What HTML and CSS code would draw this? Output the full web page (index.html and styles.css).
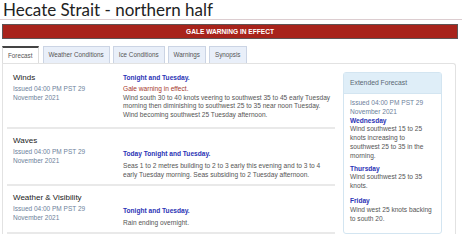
FILE: index.html
```html
<!DOCTYPE html>
<html lang="en">
<head>
  <meta charset="UTF-8" />
  <meta name="viewport" content="width=device-width, initial-scale=1.0"/>
  <title>Hecate Strait - northern half</title>
  <link rel="stylesheet" href="styles.css">
</head>
<body>

  <h1 class="title">Hecate Strait - northern half</h1>

  <div class="warning">GALE WARNING IN EFFECT</div>

  <div class="tabs">
    <div class="tab active">Forecast</div>
    <div class="tab">Weather Conditions</div>
    <div class="tab">Ice Conditions</div>
    <div class="tab">Warnings</div>
    <div class="tab">Synopsis</div>
  </div>

  <div class="panel">
    <div class="main">

      <div class="section first">
        <div class="meta">
          <div class="label">Winds</div>
          <div class="issued">Issued 04:00 PM PST 29<br>November 2021</div>
        </div>
        <div class="detail">
          <div class="period tight">Tonight and Tuesday.</div>
          <div class="alert">Gale warning in effect.</div>
          <div class="text">Wind south 30 to 40 knots veering to southwest 35 to 45 early Tuesday morning then diminishing to southwest 25 to 35 near noon Tuesday. Wind becoming southwest 25 Tuesday afternoon.</div>
        </div>
      </div>

      <div class="section">
        <div class="meta">
          <div class="label">Waves</div>
          <div class="issued">Issued 04:00 PM PST 29<br>November 2021</div>
        </div>
        <div class="detail lower">
          <div class="period">Today Tonight and Tuesday.</div>
          <div class="text">Seas 1 to 2 metres building to 2 to 3 early this evening and to 3 to 4 early Tuesday morning. Seas subsiding to 2 Tuesday afternoon.</div>
        </div>
      </div>

      <div class="section">
        <div class="meta">
          <div class="label">Weather &amp; Visibility</div>
          <div class="issued">Issued 04:00 PM PST 29<br>November 2021</div>
        </div>
        <div class="detail lower">
          <div class="period">Tonight and Tuesday.</div>
          <div class="text">Rain ending overnight.</div>
        </div>
      </div>

    </div>

    <div class="extended">
      <div class="ext-head">Extended Forecast</div>
      <div class="ext-body">
        <div class="issued">Issued 04:00 PM PST 29<br>November 2021</div>
        <div class="day">Wednesday</div>
        <div class="text">Wind southwest 15 to 25 knots increasing to southwest 25 to 35 in the morning.</div>
        <div class="day spaced">Thursday</div>
        <div class="text">Wind southwest 25 to 35 knots.</div>
        <div class="day spaced wide">Friday</div>
        <div class="text">Wind west 25 knots backing to south 20.</div>
      </div>
    </div>
  </div>

</body>
</html>
```

FILE: styles.css
```css
body {
  margin: 0;
  font-family: 'Liberation Sans', Arial, sans-serif;
  background: #fff;
  color: #555;
}

.title {
  margin: 0;
  padding: 0 3px;
  font-family: Lato, 'Liberation Sans', sans-serif;
  font-weight: 400;
  font-size: 17px;
  line-height: 19px;
  color: #222;
  border-bottom: 1px solid #dccdd0;
}

.warning {
  margin: 4px 4px 0 2px;
  height: 13px;
  line-height: 13px;
  background: #a8231b;
  border: 1px solid #5e5454;
  color: #fff;
  font-weight: bold;
  font-size: 6.6px;
  text-align: center;
}

.tabs {
  display: flex;
  gap: 3px;
  margin: 7px 0 0 2px;
}

.tab {
  height: 16px;
  line-height: 16px;
  padding: 0 5px;
  font-size: 6.3px;
  color: #555;
  background: #e9eff9;
  border: 1px solid #cbd4e4;
  border-bottom: none;
}

.tab.active {
  background: #fff;
  border-color: #ddd;
  border-top: 2px solid #444;
  height: 15px;
  margin-right: 1px;
}

.panel {
  display: flex;
  margin: 0 6px 0 2px;
  padding-left: 4px;
  border: 1px solid #e2e2e2;
  border-bottom: none;
  border-radius: 0 3px 0 0;
}

.main {
  width: 328px;
}

.section {
  display: flex;
  padding: 7px 0 5px 6px;
  border-bottom: 2px solid #e9e9e9;
}

.section.first {
  padding-top: 9px;
  padding-bottom: 8px;
}

.meta {
  width: 110px;
  flex-shrink: 0;
}

.label {
  font-size: 8px;
  line-height: 10px;
  color: #1a1a1a;
}

.issued {
  margin-top: 2px;
  font-size: 6.5px;
  line-height: 8.6px;
  color: #6d819b;
}

.detail {
  flex: 1;
  font-size: 6.6px;
  line-height: 8.6px;
  padding-top: 1px;
}

.detail.lower {
  padding-top: 14px;
}

.period {
  font-weight: bold;
  color: #2b33b5;
  margin-bottom: 3px;
}

.period.tight {
  margin-bottom: 2.5px;
}

.alert {
  color: #a5392e;
}

.text {
  color: #555;
}

.extended {
  width: 97px;
  margin: 8px 0 0 8px;
  align-self: flex-start;
  border: 1px solid #d3e5f1;
  border-radius: 3px;
}

.ext-head {
  height: 20px;
  line-height: 20px;
  padding: 0 6px;
  background: #dfeef8;
  border-bottom: 1px solid #d3e5f1;
  font-size: 6.8px;
  color: #5a6873;
}

.ext-body {
  padding: 5px 6px 10px;
  font-size: 6.6px;
  line-height: 8.8px;
}

.ext-body .issued {
  margin: 0;
  font-size: 6.6px;
  line-height: 8.8px;
}

.day {
  font-weight: bold;
  color: #2b33b5;
}

.day.spaced {
  margin-top: 4px;
}

.day.wide {
  margin-top: 6px;
}
```
